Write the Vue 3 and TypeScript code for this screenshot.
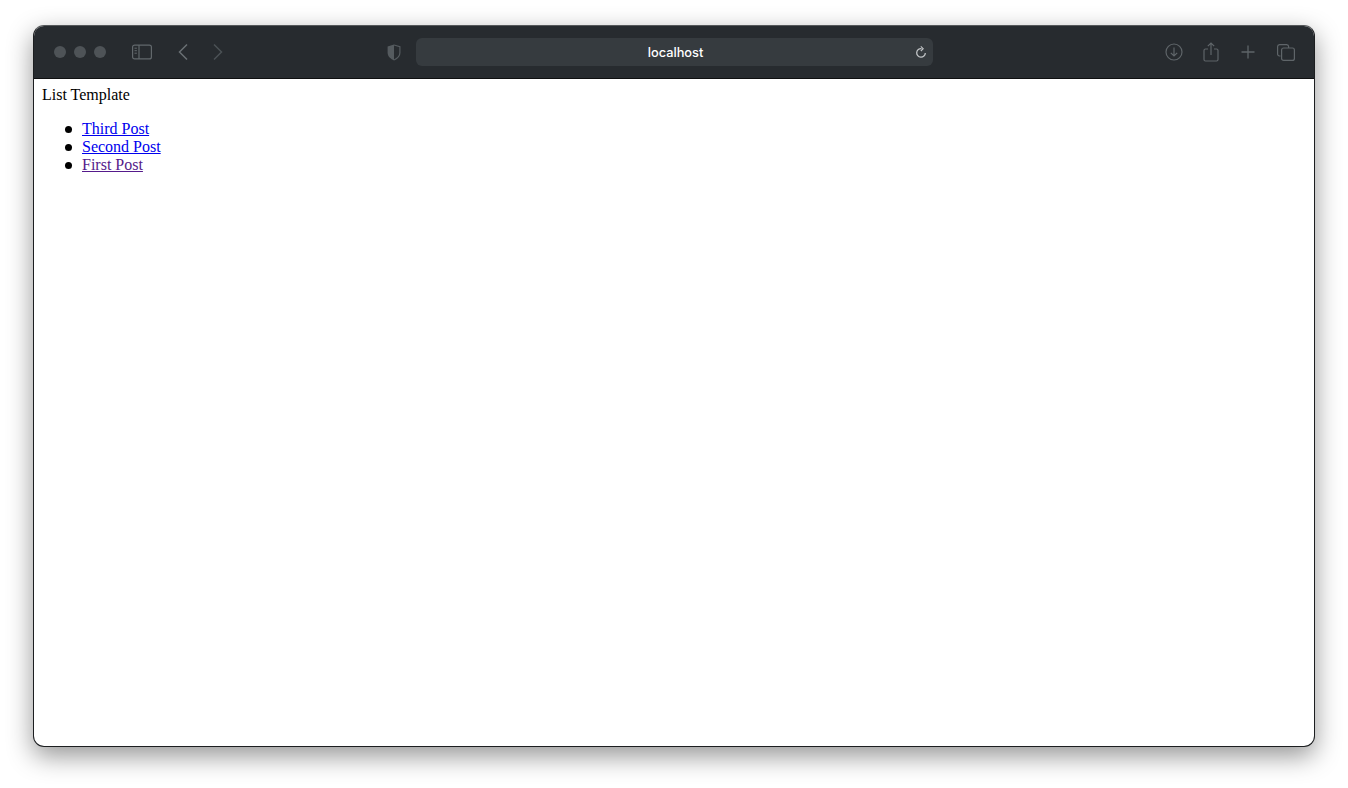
<script setup lang="ts">
const posts = [
  { title: 'Third Post', visited: false },
  { title: 'Second Post', visited: false },
  { title: 'First Post', visited: true },
]
</script>

<template>
  <div class="stage">
    <div class="window">
      <header class="toolbar">
        <div class="dots"><i></i><i></i><i></i></div>
        <svg class="ic sidebar" width="20" height="16" viewBox="0 0 20 16" fill="none" stroke="#62686c" stroke-width="1.2">
          <rect x=".6" y="1.1" width="18.800" height="13.800" rx="2" />
          <path d="M7 1.100v13.800" />
          <path d="M2.500 4.200h2.400M2.500 6.700h2.400M2.500 9.200h2.400" stroke-width="1" />
        </svg>
        <svg class="ic back" width="12" height="18" viewBox="0 0 12 18" fill="none" stroke="#6a7074" stroke-width="1.5">
          <path d="M10 1.500 2.500 9l7.500 7.500" />
        </svg>
        <svg class="ic forward" width="12" height="18" viewBox="0 0 12 18" fill="none" stroke="#4b5155" stroke-width="1.5">
          <path d="M2 1.500 9.500 9 2 16.500" />
        </svg>
        <svg class="ic shield" width="14" height="17" viewBox="0 0 14 17">
          <path d="M7 .6.600 2.400v6.300c0 3.700 3.200 6.200 6.400 7.700z" fill="#555b5f" />
          <path d="M7 1l5.900 1.700v6c0 3.500-3 5.900-5.900 7.300" fill="none" stroke="#555b5f" stroke-width="1.200" />
        </svg>
        <div class="url">
          <span class="host">localhost</span>
          <svg class="reload" width="12" height="13" viewBox="0 0 12 13" fill="none" stroke="#c2c5c7" stroke-width="1.300">
            <path d="M6.500 2.600A4.300 4.300 0 1 0 10.300 7" />
            <path d="M5.800 .4 8.200 2.700 5.800 5" stroke-width="1.100" />
          </svg>
        </div>
        <div class="actions">
          <svg width="18" height="18" viewBox="0 0 18 18" fill="none" stroke="#5f6569" stroke-width="1.200">
            <circle cx="9" cy="9" r="8" />
            <path d="M9 4.500v8.500M5.800 9.800 9 13l3.200-3.200" />
          </svg>
          <svg width="16" height="20" viewBox="0 0 16 20" fill="none" stroke="#5f6569" stroke-width="1.200">
            <path d="M5 7H2.500A1.500 1.500 0 0 0 1 8.500v9A1.500 1.500 0 0 0 2.500 19h11a1.500 1.500 0 0 0 1.500-1.500v-9A1.500 1.500 0 0 0 13.500 7H11" />
            <path d="M8 13V1.200M4.800 4.200 8 1l3.200 3.200" />
          </svg>
          <svg width="14" height="14" viewBox="0 0 14 14" fill="none" stroke="#5f6569" stroke-width="1.300">
            <path d="M7 .5v13M.5 7h13" />
          </svg>
          <svg width="18" height="17" viewBox="0 0 18 17" fill="none" stroke="#5f6569" stroke-width="1.200">
            <path d="M3.500 12H2.500A1.900 1.900 0 0 1 .6 10V2.600A2 2 0 0 1 2.500.6h7.200A2 2 0 0 1 11.600 2.600V4" />
            <rect x="4.600" y="4" width="12.800" height="12.400" rx="2" />
          </svg>
        </div>
      </header>
      <main class="page">
        <div>List Template</div>
        <ul>
          <li v-for="post in posts" :key="post.title">
            <a href="#" :class="{ visited: post.visited }" @click.prevent>{{ post.title }}</a>
          </li>
        </ul>
      </main>
    </div>
  </div>
</template>

<style>
html, body { margin: 0; background: #fff; overflow: hidden; }
</style>

<style scoped>
.stage {
  box-sizing: border-box;
  width: 1348px;
  height: 788px;
  padding: 25px 33px 41px;
  background: #fff;
}
.window {
  box-sizing: border-box;
  height: 722px;
  display: flex;
  flex-direction: column;
  border: 1px solid #1c1e20;
  border-top-color: #55585a;
  border-radius: 11px;
  overflow: hidden;
  background: #fff;
  box-shadow: 0 9px 26px rgba(0, 0, 0, 0.42);
}
.toolbar {
  box-sizing: border-box;
  flex: none;
  height: 53px;
  display: flex;
  align-items: center;
  padding-left: 20px;
  background: #272b2f;
  border-bottom: 1px solid #0e0f10;
}
.dots {
  display: flex;
  gap: 8px;
}
.dots i {
  width: 12px;
  height: 12px;
  border-radius: 50%;
  background: #4e5357;
}
.ic { flex: none; }
.sidebar { margin-left: 26px; }
.back { margin-left: 25px; }
.forward { margin-left: 23px; }
.shield { margin-left: 163px; }
.url {
  position: relative;
  flex: none;
  width: 517px;
  height: 28px;
  margin-left: 15px;
  display: flex;
  align-items: center;
  justify-content: center;
  border-radius: 6px;
  background: #363b3f;
  color: #fff;
  font: 500 12.8px/1 Inter, "Liberation Sans", sans-serif;
}
.host {
  padding: 2px 0 0 2px;
}
.reload {
  position: absolute;
  right: 6px;
  top: 8px;
}
.actions {
  display: flex;
  align-items: center;
  margin-left: 232px;
  gap: 20px;
}
.actions svg:nth-child(3) { margin-left: 2px; }
.actions svg:nth-child(4) { margin-left: 2px; }
.page {
  flex: 1;
  padding: 7px 8px 8px;
  color: #000;
  font: 16px/18px "Liberation Serif", "Times New Roman", serif;
}
ul {
  margin: 16px 0;
  padding-left: 40px;
  list-style: none;
}
li {
  position: relative;
}
li::before {
  content: "";
  position: absolute;
  left: -17px;
  top: 6px;
  width: 7px;
  height: 7px;
  border-radius: 50%;
  background: #000;
}
a { color: #0000ee; text-decoration: underline; }
a.visited { color: #551a8b; }
</style>
